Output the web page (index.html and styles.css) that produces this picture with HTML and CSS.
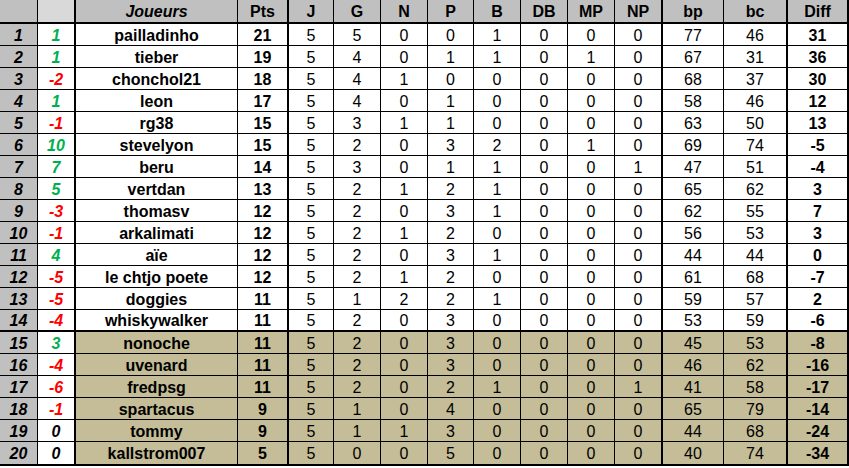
FILE: index.html
```html
<!DOCTYPE html>
<html lang="fr">
<head>
<meta charset="utf-8">
<title>Classement</title>
<link rel="stylesheet" href="styles.css">
</head>
<body>
<table class="standings">
  <colgroup>
    <col class="c-rank"><col class="c-chg"><col class="c-name"><col class="c-pts">
    <col class="c-s1"><col class="c-s2"><col class="c-s2"><col class="c-s1"><col class="c-s2">
    <col class="c-s2"><col class="c-s2"><col class="c-s2">
    <col class="c-bp"><col class="c-bc"><col class="c-diff">
  </colgroup>
  <thead>
    <tr>
      <th class="rank"></th>
      <th class="chg"></th>
      <th class="name"><em>Joueurs</em></th>
      <th>Pts</th>
      <th class="thick-l">J</th>
      <th>G</th><th>N</th><th>P</th><th>B</th><th>DB</th><th>MP</th><th>NP</th>
      <th class="thick-l">bp</th>
      <th>bc</th>
      <th class="thick-l diff">Diff</th>
    </tr>
  </thead>
  <tbody>
    <tr><td class="rank">1</td><td class="chg up">1</td><td class="name">pailladinho</td><td class="pts">21</td><td class="thick-l">5</td><td>5</td><td>0</td><td>0</td><td>1</td><td>0</td><td>0</td><td>0</td><td class="thick-l">77</td><td>46</td><td class="diff thick-l">31</td></tr>
    <tr><td class="rank">2</td><td class="chg up">1</td><td class="name">tieber</td><td class="pts">19</td><td class="thick-l">5</td><td>4</td><td>0</td><td>1</td><td>1</td><td>0</td><td>1</td><td>0</td><td class="thick-l">67</td><td>31</td><td class="diff thick-l">36</td></tr>
    <tr><td class="rank">3</td><td class="chg down">-2</td><td class="name">chonchol21</td><td class="pts">18</td><td class="thick-l">5</td><td>4</td><td>1</td><td>0</td><td>0</td><td>0</td><td>0</td><td>0</td><td class="thick-l">68</td><td>37</td><td class="diff thick-l">30</td></tr>
    <tr><td class="rank">4</td><td class="chg up">1</td><td class="name">leon</td><td class="pts">17</td><td class="thick-l">5</td><td>4</td><td>0</td><td>1</td><td>0</td><td>0</td><td>0</td><td>0</td><td class="thick-l">58</td><td>46</td><td class="diff thick-l">12</td></tr>
    <tr><td class="rank">5</td><td class="chg down">-1</td><td class="name">rg38</td><td class="pts">15</td><td class="thick-l">5</td><td>3</td><td>1</td><td>1</td><td>0</td><td>0</td><td>0</td><td>0</td><td class="thick-l">63</td><td>50</td><td class="diff thick-l">13</td></tr>
    <tr><td class="rank">6</td><td class="chg up">10</td><td class="name">stevelyon</td><td class="pts">15</td><td class="thick-l">5</td><td>2</td><td>0</td><td>3</td><td>2</td><td>0</td><td>1</td><td>0</td><td class="thick-l">69</td><td>74</td><td class="diff thick-l">-5</td></tr>
    <tr><td class="rank">7</td><td class="chg up">7</td><td class="name">beru</td><td class="pts">14</td><td class="thick-l">5</td><td>3</td><td>0</td><td>1</td><td>1</td><td>0</td><td>0</td><td>1</td><td class="thick-l">47</td><td>51</td><td class="diff thick-l">-4</td></tr>
    <tr><td class="rank">8</td><td class="chg up">5</td><td class="name">vertdan</td><td class="pts">13</td><td class="thick-l">5</td><td>2</td><td>1</td><td>2</td><td>1</td><td>0</td><td>0</td><td>0</td><td class="thick-l">65</td><td>62</td><td class="diff thick-l">3</td></tr>
    <tr><td class="rank">9</td><td class="chg down">-3</td><td class="name">thomasv</td><td class="pts">12</td><td class="thick-l">5</td><td>2</td><td>0</td><td>3</td><td>1</td><td>0</td><td>0</td><td>0</td><td class="thick-l">62</td><td>55</td><td class="diff thick-l">7</td></tr>
    <tr><td class="rank">10</td><td class="chg down">-1</td><td class="name">arkalimati</td><td class="pts">12</td><td class="thick-l">5</td><td>2</td><td>1</td><td>2</td><td>0</td><td>0</td><td>0</td><td>0</td><td class="thick-l">56</td><td>53</td><td class="diff thick-l">3</td></tr>
    <tr><td class="rank">11</td><td class="chg up">4</td><td class="name">aïe</td><td class="pts">12</td><td class="thick-l">5</td><td>2</td><td>0</td><td>3</td><td>1</td><td>0</td><td>0</td><td>0</td><td class="thick-l">44</td><td>44</td><td class="diff thick-l">0</td></tr>
    <tr><td class="rank">12</td><td class="chg down">-5</td><td class="name">le chtjo poete</td><td class="pts">12</td><td class="thick-l">5</td><td>2</td><td>1</td><td>2</td><td>0</td><td>0</td><td>0</td><td>0</td><td class="thick-l">61</td><td>68</td><td class="diff thick-l">-7</td></tr>
    <tr><td class="rank">13</td><td class="chg down">-5</td><td class="name">doggies</td><td class="pts">11</td><td class="thick-l">5</td><td>1</td><td>2</td><td>2</td><td>1</td><td>0</td><td>0</td><td>0</td><td class="thick-l">59</td><td>57</td><td class="diff thick-l">2</td></tr>
    <tr class="cut"><td class="rank">14</td><td class="chg down">-4</td><td class="name">whiskywalker</td><td class="pts">11</td><td class="thick-l">5</td><td>2</td><td>0</td><td>3</td><td>0</td><td>0</td><td>0</td><td>0</td><td class="thick-l">53</td><td>59</td><td class="diff thick-l">-6</td></tr>
    <tr class="zone"><td class="rank">15</td><td class="chg up">3</td><td class="name">nonoche</td><td class="pts">11</td><td class="thick-l">5</td><td>2</td><td>0</td><td>3</td><td>0</td><td>0</td><td>0</td><td>0</td><td class="thick-l">45</td><td>53</td><td class="diff thick-l">-8</td></tr>
    <tr class="zone"><td class="rank">16</td><td class="chg down">-4</td><td class="name">uvenard</td><td class="pts">11</td><td class="thick-l">5</td><td>2</td><td>0</td><td>3</td><td>0</td><td>0</td><td>0</td><td>0</td><td class="thick-l">46</td><td>62</td><td class="diff thick-l">-16</td></tr>
    <tr class="zone"><td class="rank">17</td><td class="chg down">-6</td><td class="name">fredpsg</td><td class="pts">11</td><td class="thick-l">5</td><td>2</td><td>0</td><td>2</td><td>1</td><td>0</td><td>0</td><td>1</td><td class="thick-l">41</td><td>58</td><td class="diff thick-l">-17</td></tr>
    <tr class="zone"><td class="rank">18</td><td class="chg down">-1</td><td class="name">spartacus</td><td class="pts">9</td><td class="thick-l">5</td><td>1</td><td>0</td><td>4</td><td>0</td><td>0</td><td>0</td><td>0</td><td class="thick-l">65</td><td>79</td><td class="diff thick-l">-14</td></tr>
    <tr class="zone"><td class="rank">19</td><td class="chg">0</td><td class="name">tommy</td><td class="pts">9</td><td class="thick-l">5</td><td>1</td><td>1</td><td>3</td><td>0</td><td>0</td><td>0</td><td>0</td><td class="thick-l">44</td><td>68</td><td class="diff thick-l">-24</td></tr>
    <tr class="zone last"><td class="rank">20</td><td class="chg">0</td><td class="name">kallstrom007</td><td class="pts">5</td><td class="thick-l">5</td><td>0</td><td>0</td><td>5</td><td>0</td><td>0</td><td>0</td><td>0</td><td class="thick-l">40</td><td>74</td><td class="diff thick-l">-34</td></tr>
  </tbody>
</table>
</body>
</html>
```

FILE: styles.css
```css
html, body {
  margin: 0;
  padding: 0;
  background: #ffffff;
}

.standings {
  border-collapse: separate;
  border-spacing: 0;
  table-layout: fixed;
  width: 849px;
  font-family: "Liberation Sans", Arial, sans-serif;
  font-size: 16px;
  color: #000;
}

.c-rank { width: 37px; }
.c-chg { width: 37px; }
.c-name { width: 163px; }
.c-pts { width: 50px; }
.c-s1 { width: 46px; }
.c-s2 { width: 47px; }
.c-bp { width: 62px; }
.c-bc { width: 63px; }
.c-diff { width: 63px; }

.standings th,
.standings td {
  box-sizing: border-box;
  padding: 0;
  text-align: center;
  vertical-align: middle;
  border-left: 1px solid #000;
  border-bottom: 1px solid #000;
  height: 22px;
  line-height: 18px;
  white-space: nowrap;
  overflow: hidden;
}

.standings th:first-child,
.standings td:first-child {
  border-left: none;
}

.standings th {
  background: #c0c0c0;
  font-weight: bold;
  height: 24px;
  border-bottom: 2px solid #000;
  padding-top: 1px;
}

.standings th.chg {
  background: #d9d9d9;
}

.standings th em {
  font-style: italic;
}

.standings .name,
.standings .thick-l {
  border-left: 2px solid #000;
}

.standings th.diff,
.standings td.diff {
  border-right: 2px solid #000;
}

.standings td {
  padding-top: 2px;
}

.standings td.rank {
  background: #c0c0c0;
  font-weight: bold;
  font-style: italic;
}

.standings td.chg {
  background: #ffffff;
  font-weight: bold;
  font-style: italic;
  color: #000;
}

.standings td.chg.up { color: #00b050; }
.standings td.chg.down { color: #ff0000; }

.standings td.name,
.standings td.pts,
.standings td.diff {
  font-weight: bold;
}

.standings tr.cut td {
  border-bottom: 2px solid #000;
}

.standings tr.zone td:not(.rank):not(.chg) {
  background: #c4bd97;
}

.standings tr.last td {
  border-bottom: 2px solid #000;
  height: 24px;
  padding-bottom: 1px;
}
```
